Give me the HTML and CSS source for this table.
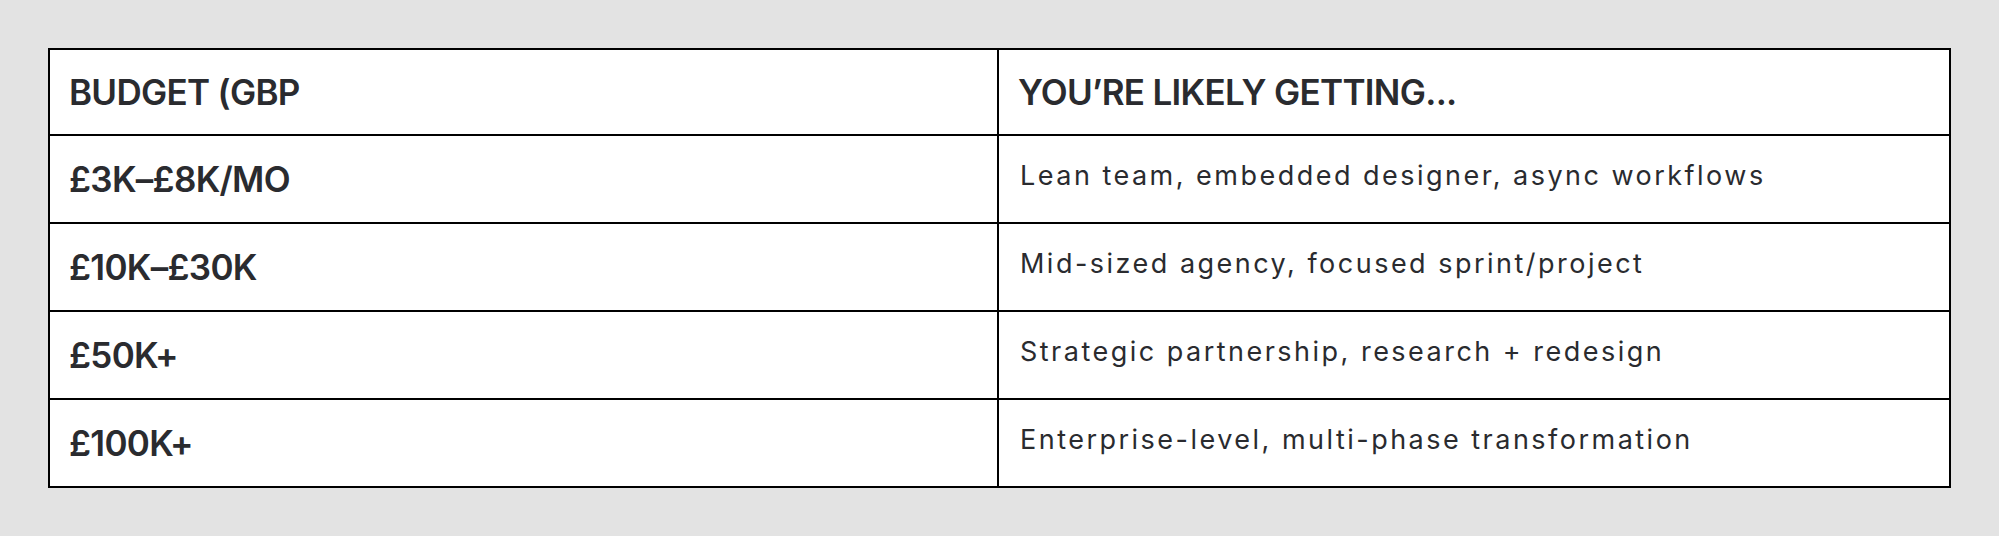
FILE: index.html
```html
<!DOCTYPE html>
<html lang="en">
<head>
<meta charset="utf-8">
<title>Budget table</title>
<link rel="stylesheet" href="styles.css">
</head>
<body>
<main class="page">
  <table class="budget">
    <colgroup>
      <col class="col-budget">
      <col class="col-getting">
    </colgroup>
    <thead>
      <tr>
        <th class="col-head">BUDGET (GBP</th>
        <th class="col-head">YOU’RE LIKELY GETTING...</th>
      </tr>
    </thead>
    <tbody>
      <tr>
        <td class="amount">£3K–£8K/MO</td>
        <td class="desc">Lean team, embedded designer, async workflows</td>
      </tr>
      <tr>
        <td class="amount">£10K–£30K</td>
        <td class="desc">Mid-sized agency, focused sprint/project</td>
      </tr>
      <tr>
        <td class="amount">£50K+</td>
        <td class="desc">Strategic partnership, research + redesign</td>
      </tr>
      <tr>
        <td class="amount">£100K+</td>
        <td class="desc">Enterprise-level, multi-phase transformation</td>
      </tr>
    </tbody>
  </table>
</main>
</body>
</html>
```

FILE: styles.css
```css
html, body {
  margin: 0;
  padding: 0;
  background: #e3e3e3;
}

.page {
  padding: 48px;
}

.budget {
  width: 100%;
  border-collapse: collapse;
  table-layout: fixed;
  background: #ffffff;
  border: 2px solid #000;
  font-family: Inter, "Noto Sans", sans-serif;
  color: #2a2b2f;
}

.col-budget {
  width: 949px;
}

.budget th,
.budget td {
  border: 2px solid #000;
  padding: 0 19px;
  text-align: left;
  vertical-align: middle;
}

.budget th {
  height: 84px;
}

.budget td {
  height: 86px;
}

.col-head,
.amount {
  font-size: 35px;
  font-weight: 600;
  letter-spacing: -0.02em;
}

.budget .desc {
  font-size: 27px;
  font-weight: 400;
  letter-spacing: 0.092em;
  height: 78px;
  padding-bottom: 8px;
  padding-left: 21px;
}
```
